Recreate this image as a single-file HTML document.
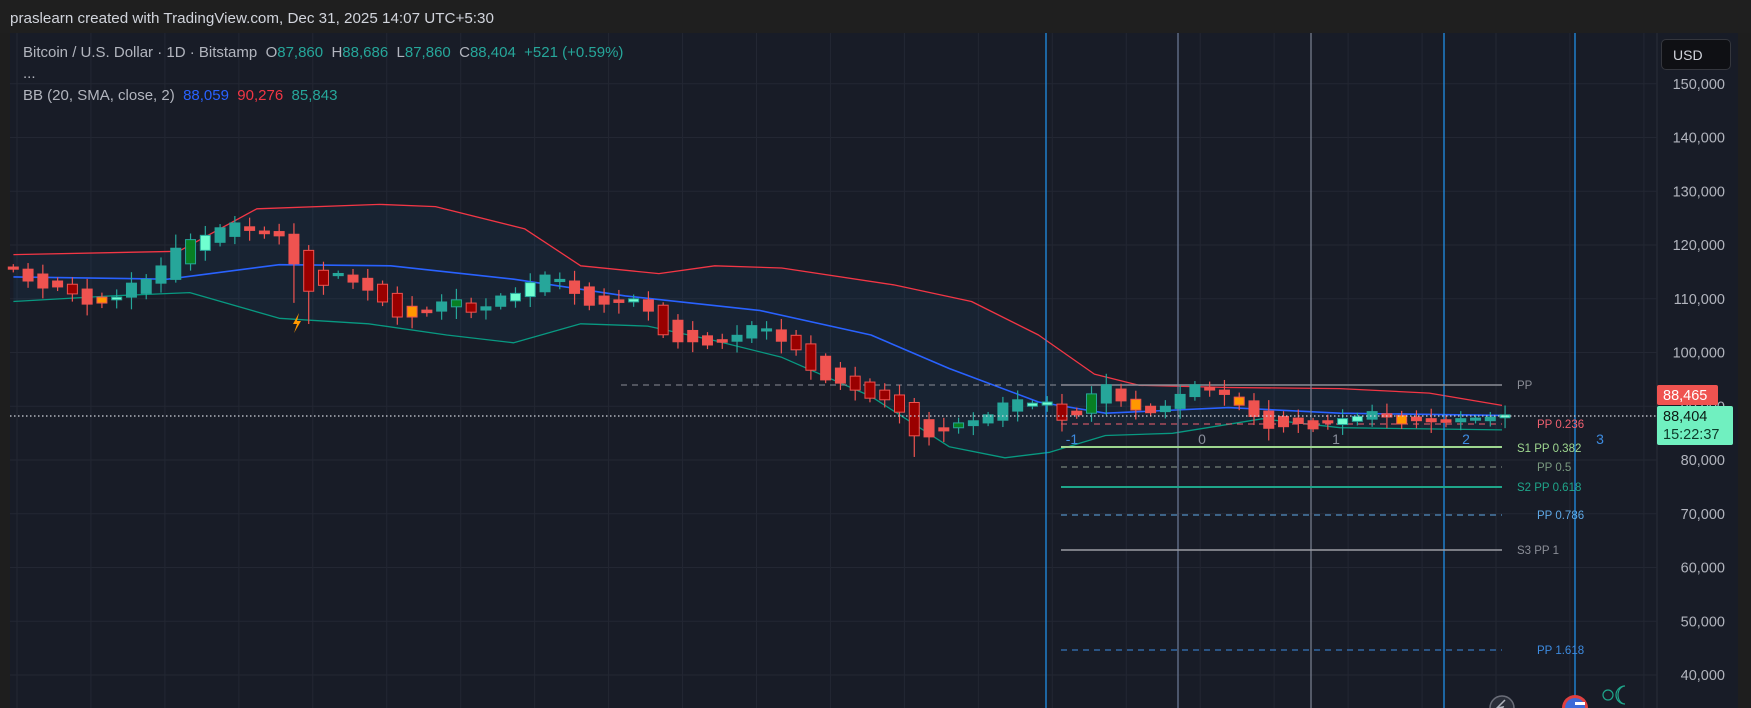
<!DOCTYPE html>
<html><head><meta charset="utf-8">
<style>
html,body{margin:0;padding:0;background:#1e1e1e;width:1751px;height:708px;overflow:hidden;font-family:"Liberation Sans",sans-serif;}
#top{position:absolute;left:0;top:0;width:1751px;height:33px;background:#1f1f1f;color:#d1d4dc;font-size:15.2px;line-height:38px;padding-left:10px;box-sizing:border-box;}
#panel{position:absolute;left:10px;top:33px;width:1728px;height:675px;background:#181c27;}
svg{position:absolute;left:0;top:0;}
.leg{position:absolute;color:#b2b5be;font-size:15px;white-space:nowrap;}
.g{color:#26a69a}
</style></head><body>
<div id="top">praslearn created with TradingView.com, Dec 31, 2025 14:07 UTC+5:30</div>
<div id="panel"></div>
<svg id="s" width="1751" height="708" viewBox="0 0 1751 708" font-family="Liberation Sans, sans-serif"></svg>
<div class="leg" style="left:23px;top:44px">Bitcoin / U.S. Dollar · 1D · Bitstamp&nbsp; O<span class="g">87,860</span>&nbsp; H<span class="g">88,686</span>&nbsp; L<span class="g">87,860</span>&nbsp; C<span class="g">88,404</span>&nbsp; <span class="g">+521 (+0.59%)</span></div>
<div class="leg" style="left:23px;top:65px">...</div>
<div class="leg" style="left:23px;top:87px">BB (20, SMA, close, 2)&nbsp; <span style="color:#2962ff">88,059</span>&nbsp; <span style="color:#f23645">90,276</span>&nbsp; <span class="g">85,843</span></div>
<div style="position:absolute;left:1661px;top:39px;width:70px;height:31px;background:#0f1014;border:1px solid #34363d;border-radius:5px;box-sizing:border-box;color:#d1d4dc;font-size:14px;line-height:30px;padding-left:11px">USD</div>
<script>
var S=document.getElementById('s'),h='';
function Y(p){return 460-(p-80)*5.375;}
h+='<rect x="1657" y="33" width="81" height="675" fill="#181c27"/>';
h+='<line x1="1657" y1="33" x2="1657" y2="708" stroke="#2a2e39"/>';
for(var p=40;p<=150;p+=10){var y=Y(p);h+='<line x1="10" y1="'+y+'" x2="1657" y2="'+y+'" stroke="#232733"/>';
h+='<text x="1725" y="'+(y+5)+'" fill="#b2b5be" font-size="14.5" text-anchor="end">'+p+',000</text>';}
for(var x=17;x<1657;x+=73.95){h+='<line x1="'+x+'" y1="33" x2="'+x+'" y2="708" stroke="#232733"/>';}
var up=[[12,228],[160,225],[230,187],[340,183],[390,185],[470,205],[520,238],[590,245],[640,238],[700,240],[800,255],[870,270],[930,300],[980,335],[1020,345],[1100,347],[1200,348],[1280,352],[1345,363]];
var md=[[12,248],[150,250],[250,237],[350,238],[460,250],[560,265],[680,278],[780,300],[850,330],[930,360],[990,370],[1100,365],[1200,370],[1345,372]];
var lo=[[12,270],[100,265],[170,262],[250,285],[330,290],[400,300],[460,307],[520,290],[580,292],[640,305],[700,320],[780,355],[850,400],[900,410],[940,405],[990,390],[1050,388],[1100,380],[1130,375],[1200,383],[1345,385]];
var k=1.1167;function pts(a){return a.map(function(q){return (q[0]*k).toFixed(1)+','+(q[1]*k).toFixed(1)}).join(' ');}
var rev=lo.slice().reverse();
h+='<polygon points="'+pts(up)+' '+pts(rev)+'" fill="rgba(33,150,243,0.06)"/>';
h+='<polyline points="'+pts(up)+'" fill="none" stroke="#f23645" stroke-width="1.3" stroke-linejoin="round"/>';
h+='<polyline points="'+pts(md)+'" fill="none" stroke="#2962ff" stroke-width="1.6" stroke-linejoin="round"/>';
h+='<polyline points="'+pts(lo)+'" fill="none" stroke="#089981" stroke-width="1.3" stroke-linejoin="round"/>';
[[1046,'#2196f3'],[1178,'#6f7c99'],[1311,'#7c8394'],[1444,'#2196f3'],[1575,'#2196f3']].forEach(function(v){h+='<line x1="'+v[0]+'" y1="33" x2="'+v[0]+'" y2="708" stroke="'+v[1]+'" stroke-width="1.2"/>';});
[[1072,'-1'],[1202,'0'],[1336,'1'],[1466,'2'],[1600,'3']].forEach(function(v){h+='<text x="'+v[0]+'" y="444" fill="'+(v[1]=='0'||v[1]=='1'?'#8a8f9c':'#3d8be0')+'" font-size="14" text-anchor="middle">'+v[1]+'</text>';});
h+='<line x1="621" y1="385" x2="1061" y2="385" stroke="#8a8d96" stroke-dasharray="6,5"/>';
h+='<line x1="1061" y1="385" x2="1502" y2="385" stroke="#8a8d96" stroke-width="1.6"/>';
h+='<line x1="1061" y1="424" x2="1502" y2="424" stroke="#f06070" stroke-dasharray="6,5"/>';
h+='<line x1="1061" y1="447" x2="1502" y2="447" stroke="#9ed68f" stroke-width="2"/>';
h+='<line x1="1061" y1="467" x2="1502" y2="467" stroke="#8b9a8e" stroke-dasharray="6,5"/>';
h+='<line x1="1061" y1="487" x2="1502" y2="487" stroke="#1fa58a" stroke-width="2"/>';
h+='<line x1="1061" y1="515" x2="1502" y2="515" stroke="#5ea8e6" stroke-dasharray="6,5"/>';
h+='<line x1="1061" y1="550" x2="1502" y2="550" stroke="#9a9ca3" stroke-width="1.6"/>';
h+='<line x1="1061" y1="650" x2="1502" y2="650" stroke="#3d8be0" stroke-dasharray="6,5"/>';
function T(x,y,c,t){h+='<text x="'+x+'" y="'+y+'" fill="'+c+'" font-size="11.5">'+t+'</text>';}
T(1517,389,'#8a8d96','PP');T(1537,428,'#f06070','PP 0.236');T(1517,452,'#9ed68f','S1 PP 0.382');T(1537,471,'#7a9a80','PP 0.5');T(1517,491,'#1fa58a','S2 PP 0.618');T(1537,519,'#5ea8e6','PP 0.786');T(1517,554,'#8a8d96','S3 PP 1');T(1537,654,'#3d8be0','PP 1.618');
var C=[[115.9,115.5],[115.5,113.3],[114.6,112],[113.3,112.2],[112.7,110.9],[111.8,109],[110.3,109.2],[109.8,110.3],[110.3,112.9],[111,113.6],[112.9,116.1],[113.6,119.4],[116.5,121],[119,121.8],[120.5,123.2],[121.6,124.1],[123.2,122.9],[122.6,122.1],[122.5,121.7],[122,116.5],[119,111.4],[115.3,112.5],[114.3,114.7],[114.4,113.1],[113.8,111.6],[112.7,109.4],[111,106.6],[108.6,106.6],[107.7,107.6],[107.7,109.4],[108.5,109.8],[109.2,107.5],[107.9,108.5],[108.6,110.5],[109.6,111],[110.4,113],[111.3,114.4],[113.2,113.6],[113.3,111],[112.2,108.8],[110.5,109],[109.6,109.5],[109.6,109.8],[109.8,107.7],[108.8,103.3],[106,102],[104.1,102],[103.1,101.4],[102.2,102.1],[102.1,103.2],[102.7,105],[104,104.4],[104.2,102.1],[103.2,100.5],[101.6,96.7],[99.3,94.9],[97.1,94.3],[95.6,93],[94.5,91.5],[93,91.2],[92.1,88.9],[90.7,84.5],[87.5,84.3],[85.8,85.6],[86,86.9],[86.4,87.3],[86.9,88.4],[87.4,90.6],[89.1,91.2],[90.2,90.4],[90.4,90.6],
[90.4,87.4],[88.9,88.6],[88.7,92.3],[90.6,94],[93.2,91],[91.3,89.3],[90,88.8],[89,90],[89.6,92.2],[91.8,94],[93.3,93.2],[93,92.2],[91.7,90.2],[91,88.1],[89.1,85.9],[88.1,86.2],[87.8,86.8],[87.3,85.8],[87.3,86.9],[86.6,87.7],[87.2,88.1],[87.6,89],[88.6,88],[88.3,86.7],[87.8,87.5],[87.5,87.3],[87.3,87.2],[87.3,87.5],[87.4,87.8],[87.5,87.8],[87.86,88.4]];
var dark={4:1,20:1,21:1,25:1,26:1,31:1,44:1,53:1,54:1,57:1,58:1,59:1,60:1,61:1,71:1};
var org={6:1,27:1,76:1,83:1,94:1};
var mint={7:1,13:1,34:1,35:1,42:1,69:1,70:1,90:1,91:1,101:1};
var dg={12:1,30:1,64:1,73:1};
for(var i=0;i<C.length;i++){var o=C[i][0],c=C[i][1],x=13.3+i*14.77;
var w=0.6+((i*37)%11)/6;var hi=Math.max(o,c)+w*0.9,lw=Math.min(o,c)-w;
if(i==19||i==20)lw-=5;if(i==61)lw-=3;if(i==11)hi+=2;
var col=c>=o?'#26a69a':'#ef5350',fill=col,st=col;
if(dark[i]){fill='#990000';st='#ef5350';}
if(org[i]){fill='#ff9800';st='#ef5350';}
if(mint[i]){fill='#70ffd0';st='#26a69a';}
if(dg[i]){fill='#087f23';st='#26a69a';}
var y1=Y(Math.max(o,c)),y2=Y(Math.min(o,c));if(y2-y1<2){y1-=1;y2+=1;}
h+='<line x1="'+x+'" y1="'+Y(hi)+'" x2="'+x+'" y2="'+Y(lw)+'" stroke="'+st+'" stroke-width="1.2"/>';
h+='<rect x="'+(x-5)+'" y="'+y1+'" width="10" height="'+(y2-y1)+'" fill="'+fill+'" stroke="'+st+'" stroke-width="1"/>';}
h+='<path d="M299,313 L293,324 L297,324 L294,333 L301,321 L297,321 Z" fill="#ff9800"/>';
h+='<line x1="10" y1="416" x2="1657" y2="416" stroke="#d1d4dc" stroke-dasharray="1.5,2.5" stroke-width="1.2"/>';
h+='<rect x="1657" y="385" width="61" height="20" rx="2" fill="#ef5350"/><text x="1663" y="400" fill="#fff" font-size="14.5">88,465</text>';
h+='<rect x="1657" y="406" width="76" height="39" rx="2" fill="#70f0c0"/><text x="1663" y="421" fill="#0d1a14" font-size="14.5">88,404</text><text x="1663" y="439" fill="#0d3a2a" font-size="14.5">15:22:37</text>';
h+='<circle cx="1502" cy="708" r="12" fill="#2a2e39" stroke="#6a6d78" stroke-width="1.5"/><path d="M1505,700 L1497,708 L1503,707 L1500,714" stroke="#b2b5be" fill="none" stroke-width="1.5"/>';
h+='<circle cx="1575" cy="708" r="13" fill="#e04040"/><circle cx="1575" cy="708" r="10" fill="#3c6ad8"/><rect x="1575" y="702" width="10" height="3" fill="#fff"/><rect x="1566" y="708" width="19" height="3" fill="#fff"/>';
h+='<circle cx="1608" cy="695" r="5" fill="none" stroke="#1fa58a" stroke-width="1.2"/><path d="M1625,686 a9,9 0 1,0 0,18 a7,9 0 0,1 0,-18" fill="none" stroke="#1fa58a" stroke-width="1.2"/>';
h+='<rect x="1738" y="33" width="13" height="675" fill="#1e1e1e"/>';
S.innerHTML=h;
</script>
</body></html>
